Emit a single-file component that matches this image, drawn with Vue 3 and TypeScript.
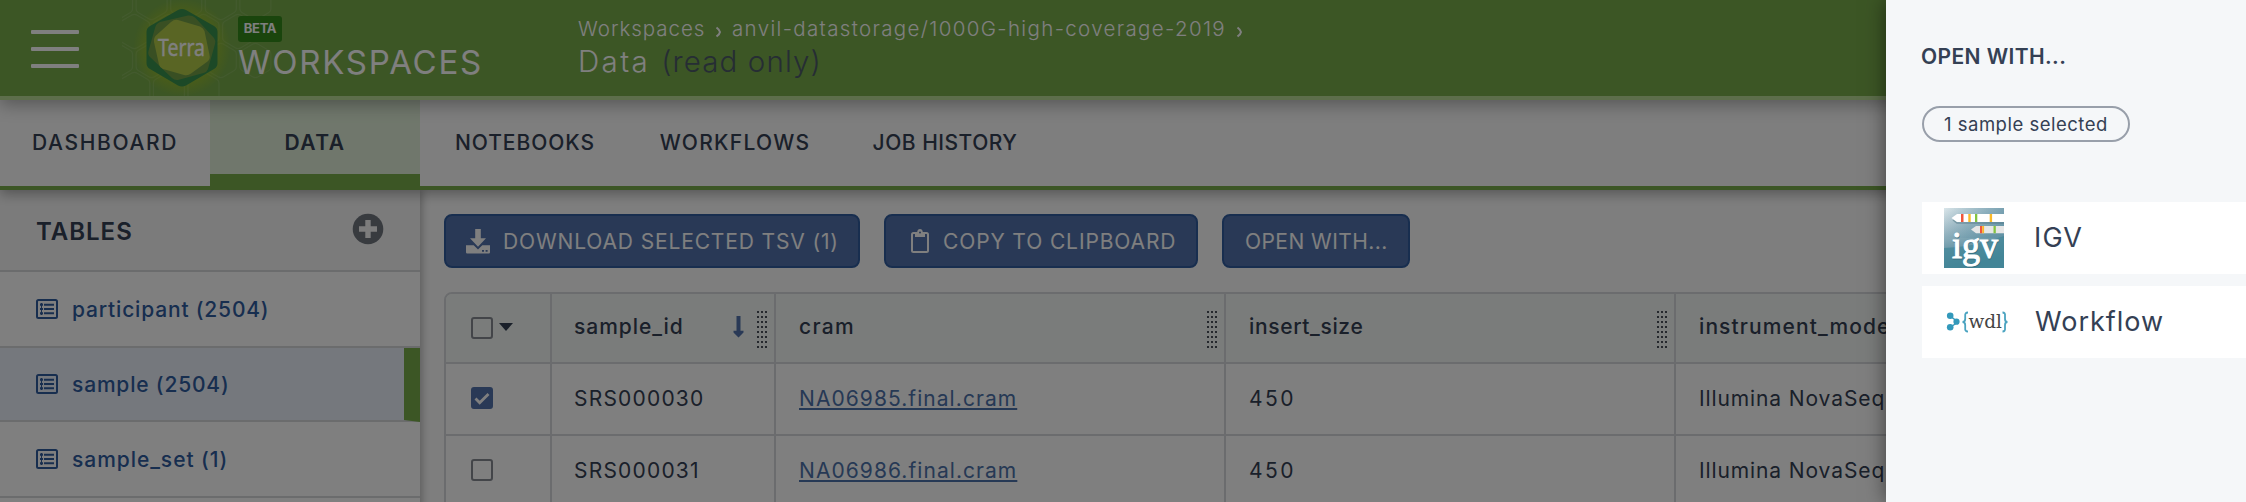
<script setup lang="ts">
interface Tab { label: string; cls: string; active?: boolean }
interface TableEntry { label: string; cls: string; active?: boolean }
interface Column { label: string; cls: string; sorted?: boolean }
interface Row { id: string; cram: string; insertSize: string; model: string; checked: boolean }

const tabs: Tab[] = [
  { label: 'DASHBOARD', cls: 'tab-dashboard' },
  { label: 'DATA', cls: 'tab-data', active: true },
  { label: 'NOTEBOOKS', cls: 'tab-notebooks' },
  { label: 'WORKFLOWS', cls: 'tab-workflows' },
  { label: 'JOB HISTORY', cls: 'tab-history' },
]
const tables: TableEntry[] = [
  { label: 'participant (2504)', cls: 'entry-first' },
  { label: 'sample (2504)', cls: 'entry-second', active: true },
  { label: 'sample_set (1)', cls: 'entry-third' },
]
const columns: Column[] = [
  { label: 'sample_id', cls: 'c-id', sorted: true },
  { label: 'cram', cls: 'c-cram' },
  { label: 'insert_size', cls: 'c-size' },
  { label: 'instrument_model', cls: 'c-model' },
]
const rows: Row[] = [
  { id: 'SRS000030', cram: 'NA06985.final.cram', insertSize: '450', model: 'Illumina NovaSeq 6000', checked: true },
  { id: 'SRS000031', cram: 'NA06986.final.cram', insertSize: '450', model: 'Illumina NovaSeq 6000', checked: false },
]

// Honeycomb behind the logo: alternate rows are shifted by half a cell.
const cellsPerRow = [5, 4, 5, 3]
const cells: { x: number; y: number }[] = []
cellsPerRow.forEach((count, r) => {
  const start = r % 2 === 0 ? 117 : 134.3
  for (let k = 0; k < count; k++) cells.push({ x: start + k * 34.6, y: 2.5 + r * 29 })
})
</script>

<template>
  <div class="screen">
    <div class="page">
      <header class="topbar">
        <div class="menu"><i /><i /><i /></div>
        <svg class="logo" width="170" height="96" viewBox="120 0 170 96">
          <defs>
            <radialGradient id="glow" gradientUnits="userSpaceOnUse" cx="182" cy="47.5" r="49">
              <stop offset="0.7" stop-color="#b0c81a" stop-opacity="0.45" />
              <stop offset="1" stop-color="#b0c81a" stop-opacity="0" />
            </radialGradient>
            <clipPath id="comb"><rect x="122" y="0" width="168" height="96" /></clipPath>
          </defs>
          <g clip-path="url(#comb)" fill="none" stroke="#a3c983" stroke-opacity="0.33" stroke-width="1.3">
            <path
              v-for="(c, i) in cells" :key="i" :transform="`translate(${c.x} ${c.y})`"
              d="M-2 -16.7Q0 -17.7 2 -16.7L13.5 -10Q15.5 -9 15.5 -6.5V6.5Q15.5 9 13.5 10L2 16.7Q0 17.7 -2 16.7L-13.5 10Q-15.5 9 -15.5 6.5V-6.5Q-15.5 -9 -13.5 -10Z"
            />
          </g>
          <circle cx="182" cy="47.5" r="49" fill="url(#glow)" />
          <path d="M178 10Q182 8 186 10L214 26Q217.500 28 217.500 32V63Q217.500 67 214 69L186 85.500Q182 87.500 178 85.500L150 69Q146.500 67 146.500 63V32Q146.500 28 150 26Z" fill="#38924e" />
          <path d="M155 28Q156 23.500 160 22L188 15.500Q192 15 195 17.500L214 38Q216 40.500 215 44L208 69Q207 72 203.500 73L178 80Q174.500 80.500 172 78L150 57Q147.500 54.500 148.500 51Z" fill="#729f47" />
          <path d="M171 22Q174.500 19 178 20L200 26.500Q203.500 28 204.500 31L209.500 55Q210.500 59 207.500 61.500L191 73.500Q188 76 184 75L163 69Q160 68 159 64.500L154 42Q153.500 38 156 35.500Z" fill="#b2ca49" />
          <text x="158" y="55.500" textLength="47" lengthAdjust="spacingAndGlyphs" class="logo-text">Terra</text>
        </svg>
        <div class="brand">
          <span class="beta">BETA</span>
          <span class="product">WORKSPACES</span>
        </div>
        <div class="crumbs">
          <div class="trail">
            <span class="crumb-root">Workspaces</span><svg class="sep" width="7" height="12" viewBox="0 0 7 12"><path d="M1.500 1.500Q4.800 4 5 6Q4.800 8 1.500 10.500" /></svg>
            <span class="crumb-name">anvil-datastorage/1000G-high-coverage-2019</span><svg class="sep" width="7" height="12" viewBox="0 0 7 12"><path d="M1.500 1.500Q4.800 4 5 6Q4.800 8 1.500 10.500" /></svg>
          </div>
          <div class="current"><span class="section">Data</span><span class="readonly">(read only)</span></div>
        </div>
      </header>

      <nav class="tabs">
        <div v-for="t in tabs" :key="t.label" class="tab" :class="[t.cls, { active: t.active }]">{{ t.label }}</div>
      </nav>

      <div class="body">
        <aside class="sidebar">
          <div class="side-head">
            <span class="side-title">TABLES</span>
            <svg class="plus" width="32" height="32" viewBox="0 0 32 32"><circle cx="16" cy="16" r="15.300" fill="#70767f" /><path d="M13.300 7h5.400v6.300H25v5.400h-6.300V25h-5.400v-6.300H7v-5.400h6.300z" fill="#f8f8f8" /></svg>
          </div>
          <div v-for="e in tables" :key="e.label" class="entry" :class="[e.cls, { active: e.active }]">
            <svg width="22" height="20" viewBox="0 0 22 20" fill="none" stroke="currentColor">
              <rect x="1" y="1" width="20" height="18" rx="1.500" stroke-width="2" />
              <path d="M8 5.700h10M8 10h10M8 14.300h10" stroke-width="2" />
              <path d="M4 5.700h3M4 10h3M4 14.300h3" stroke-width="2.200" /><path d="M5.500 4v12" stroke-width="1" />
            </svg>
            <span>{{ e.label }}</span>
          </div>
        </aside>

        <main class="content">
          <div class="actions">
            <button class="btn btn-download">
              <svg width="24" height="25" viewBox="0 0 24 25"><path d="M9.200 0h5.600v9.300h5.200L12 17.800 4 9.300h5.200z" fill="#fff" /><path d="M0 16.200h7.700L12 20.500l4.300-4.300H24v7Q24 24.500 22.800 24.500H1.200Q0 24.500 0 23.200zM16 21v1.800h2V21zm3.600 0v1.800h2V21z" fill="#fff" fill-rule="evenodd" /></svg>
              <span>DOWNLOAD SELECTED TSV (1)</span>
            </button>
            <button class="btn btn-copy">
              <svg width="18" height="24" viewBox="0 0 18 24"><rect x="1" y="4" width="16" height="19" rx="1.500" fill="none" stroke="#fff" stroke-width="2" /><path d="M4 3h2.200Q6.500 0 9 0t2.800 3H14v5H4z" fill="#fff" /><circle cx="9" cy="3.400" r="1" fill="#5272ac" /></svg>
              <span>COPY TO CLIPBOARD</span>
            </button>
            <button class="btn btn-open"><span>OPEN WITH...</span></button>
          </div>

          <div class="grid">
            <div class="row head">
              <div class="cell c-check">
                <span class="box" />
                <svg class="caret" width="14" height="8" viewBox="0 0 14 8"><path d="M0 0h14L7 8z" fill="#344054" /></svg>
              </div>
              <div v-for="c in columns" :key="c.label" class="cell" :class="c.cls">
                <span class="head-label">{{ c.label }}</span>
                <svg v-if="c.sorted" class="sort" width="11" height="22" viewBox="0 0 11 22"><path d="M3.500 0h4v14.800H10.500V16.500L5.500 21.500.500 16.500V14.800H3.500z" fill="#5272ac" /></svg>
                <span class="grip"><i v-for="n in 24" :key="n" /></span>
              </div>
            </div>
            <div v-for="r in rows" :key="r.id" class="row">
              <div class="cell c-check">
                <span class="box" :class="{ checked: r.checked }">
                  <svg v-if="r.checked" width="16" height="13" viewBox="0 0 16 13"><path d="M1.500 6.500l4.200 4.200L14.500 2" fill="none" stroke="#fff" stroke-width="2.800" /></svg>
                </span>
              </div>
              <div class="cell c-id"><span class="val">{{ r.id }}</span></div>
              <div class="cell c-cram"><a class="link">{{ r.cram }}</a></div>
              <div class="cell c-size"><span class="num">{{ r.insertSize }}</span></div>
              <div class="cell c-model"><span class="model">{{ r.model }}</span></div>
            </div>
          </div>
        </main>
      </div>
    </div>

    <div class="overlay">
      <section class="drawer">
        <h2 class="drawer-title">OPEN WITH...</h2>
        <div class="pill">1 sample selected</div>
        <div class="card">
          <svg width="60" height="60" viewBox="0 0 60 60">
            <defs>
              <linearGradient id="sky" x1="0" y1="0" x2="0.250" y2="1">
                <stop offset="0" stop-color="#dbe6ea" /><stop offset="0.350" stop-color="#a0bbc6" /><stop offset="0.650" stop-color="#6e9aaa" /><stop offset="1" stop-color="#4a8798" />
              </linearGradient>
              <linearGradient id="shade" x1="0" y1="0" x2="1" y2="0"><stop offset="0" stop-color="#5c8ea2" stop-opacity="0" /><stop offset="1" stop-color="#5c8ea2" stop-opacity="0.650" /></linearGradient>
            </defs>
            <rect width="60" height="60" fill="url(#sky)" />
            <rect width="60" height="30" fill="url(#shade)" />
            <path d="M0 40Q30 39 60 28V60H0z" fill="#3f8496" fill-opacity="0.650" />
            <path d="M9 12l4 3H60" fill="none" stroke="#4c7180" stroke-opacity="0.500" stroke-width="1.500" />
            <path d="M7.500 10L13 6H60v8H13z" fill="#fff" />
            <path d="M27 21.500L32 18H60v7.300H32z" fill="#e6e6e6" />
            <path d="M17 6h2.500v8H17zM36 18h2.300v7.300H36z" fill="#f0563b" />
            <path d="M24.300 6h2.400v8h-2.400zM45.700 6h2.400v8h-2.400zM38.300 18h1.800v7.300h-1.800z" fill="#f9b928" />
            <path d="M31 6h2.300v8H31zM49.500 18h2.300v7.300h-2.300z" fill="#83c441" />
            <text x="8.500" y="50.500" textLength="46" lengthAdjust="spacingAndGlyphs" class="igv igv-shadow">igv</text>
            <text x="8" y="49.500" textLength="46" lengthAdjust="spacingAndGlyphs" class="igv">igv</text>
          </svg>
          <span class="card-label label-igv">IGV</span>
        </div>
        <div class="card">
          <svg width="64" height="24" viewBox="0 0 64 24">
            <path d="M6 6l8 6-8 5.500" fill="none" stroke="#3399bb" stroke-width="1.500" />
            <circle cx="6.200" cy="5.700" r="3.300" fill="#3399bb" /><circle cx="12.500" cy="11.700" r="3.100" fill="#3399bb" /><circle cx="6.200" cy="17.300" r="3.300" fill="#3399bb" />
            <path d="M24 2.500Q20.800 2.500 21.200 6V9Q21.200 12 18.500 12Q21.200 12 21.200 15V18Q20.800 21.500 24 21.500M58.500 2.500Q61.500 2.500 61 6V9Q61 12 63.500 12Q61 12 61 15V18Q61.500 21.500 58.500 21.500" fill="none" stroke="#4aa3c0" stroke-width="1.800" />
            <text x="24.500" y="18" textLength="33.500" lengthAdjust="spacingAndGlyphs" class="wdl">wdl</text>
          </svg>
          <span class="card-label label-workflow">Workflow</span>
        </div>
      </section>
    </div>
  </div>
</template>

<style>
body { margin: 0; overflow: hidden; }
</style>

<style scoped>
.screen { position: relative; width: 2246px; height: 502px; overflow: hidden; font-family: Inter, "Open Sans", sans-serif; color: #344054; }
.screen * { box-sizing: border-box; }
.page { height: 502px; display: flex; flex-direction: column; background: #fdfdfd; }

.topbar { position: relative; z-index: 3; flex: none; height: 100px; display: flex; background: #78ac4a; border-bottom: 4px solid #badc96; background-clip: padding-box; box-shadow: 0 5px 16px rgba(0, 0, 0, .3); }
.menu { width: 48px; margin: 30px 41px 0 31px; display: flex; flex-direction: column; gap: 13px; }
.menu i { height: 4px; border-radius: 1px; background: #fff; }
.logo { flex: none; width: 170px; margin-right: -52px; }
.logo-text { font: 400 23px "Noto Sans", sans-serif; fill: #fff; stroke: #fff; stroke-width: .4; }
.brand { position: relative; width: 340px; padding-top: 16px; display: flex; flex-direction: column; align-items: flex-start; }
.beta { width: 44px; height: 26px; border-radius: 3px; background: #358a1b; color: #fff; font-weight: 700; font-size: 13px; line-height: 24px; text-align: center; letter-spacing: -.3px; }
.product { font-size: 33px; font-weight: 400; line-height: 41px; letter-spacing: 1.75px; color: #fff; }
.crumbs { color: #fff; white-space: nowrap; }
.trail { display: flex; align-items: center; height: 24px; margin-top: 17px; font-size: 20.5px; font-weight: 300; line-height: 24px; }
.crumb-root { letter-spacing: .98px; }
.crumb-name { letter-spacing: 1.35px; margin-left: 10px; }
.sep { fill: none; stroke: #fff; stroke-width: 2.100; margin-left: 9.500px; margin-top: 5px; }
.current { font-size: 29.500px; line-height: 40px; font-weight: 300; }
.section { letter-spacing: 2.4px; }
.readonly { letter-spacing: 1.1px; color: #4c5a68; margin-left: 11px; }

.tabs { position: relative; z-index: 2; flex: none; height: 90px; display: flex; background: #fcfcfc; border-bottom: 4px solid #78ac4a; box-shadow: 0 4px 12px rgba(0, 0, 0, .32); }
.tab { width: 210px; text-align: center; line-height: 85px; font-size: 21px; font-weight: 500; }
.tab.active { font-weight: 600; background: #e0efd8; border-bottom: 12px solid #78ac4a; }
.tab-dashboard { letter-spacing: 1.65px; }
.tab-data { letter-spacing: 1.43px; }
.tab-notebooks { letter-spacing: .97px; }
.tab-workflows { letter-spacing: 1.26px; }
.tab-history { letter-spacing: .5px; }

.body { flex: 1; display: flex; min-height: 0; }
.sidebar { flex: none; width: 420px; height: 320px; background: #fff; box-shadow: 2px 0 8px rgba(0, 0, 0, .28); }
.side-head { height: 82px; padding: 0 36px; display: flex; align-items: center; justify-content: space-between; background: #f7f7f7; border-bottom: 2px solid #d6d8da; }
.side-title { font-size: 24px; font-weight: 600; letter-spacing: 1px; margin-top: 2px; }
.plus { margin-top: -2px; }
.entry { height: 76px; padding: 0 36px; display: flex; align-items: center; gap: 14px; color: #2f5c9f; font-size: 21px; font-weight: 500; border-bottom: 2px solid #d6d8da; }
.entry.active { height: 74px; background: #ebf0fb; border-right: 16px solid #78ac4a; }
.entry-first, .entry-second { letter-spacing: .82px; }
.entry-third { letter-spacing: .95px; }

.content { flex: 1; min-width: 0; padding: 24px 0 0 24px; }
.actions { display: flex; gap: 24px; }
.btn { height: 54px; display: flex; align-items: center; border: 2px solid #305c9e; border-radius: 8px; background: #5272ac; color: #fff; padding: 0 0 0 21px; font-family: inherit; font-size: 21px; font-weight: 400; white-space: nowrap; }
.btn-download { width: 416px; letter-spacing: .86px; gap: 13px; padding-left: 20px; }
.btn-copy { width: 314px; letter-spacing: .88px; gap: 14px; padding-left: 25px; }
.btn-open { width: 188px; letter-spacing: .45px; }

.grid { width: 1880px; margin-top: 24px; border: 2px solid #d6d9dc; border-radius: 8px 0 0 0; overflow: hidden; }
.row { height: 72px; display: flex; background: #fefefe; border-bottom: 2px solid #d6d9dc; font-size: 21px; font-weight: 400; }
.row.head { height: 70px; background: #f4f9f6; font-weight: 500; }
.cell { position: relative; flex: none; display: flex; align-items: center; padding-left: 22px; padding-bottom: 1px; border-right: 2px solid #d6d9dc; white-space: nowrap; }
.head .cell { padding-bottom: 3px; }
.c-check { width: 106px; padding-left: 25px; padding-bottom: 2px; }
.head .c-check { padding-left: 25px; padding-bottom: 0; }
.c-id { width: 224px; }
.c-cram { width: 450px; padding-left: 23px; }
.c-size { width: 450px; padding-left: 23px; }
.c-model { width: 450px; padding-left: 23px; }
.head .c-id { letter-spacing: .95px; }
.head .c-cram { letter-spacing: 1.27px; }
.head .c-size { letter-spacing: .65px; }
.head .c-model { letter-spacing: 1.1px; }
.box { width: 22px; height: 22px; border: 2px solid #868a92; border-radius: 3px; display: flex; align-items: center; justify-content: center; }
.box.checked { background: #5272ac; border-color: #5272ac; }
.caret { margin-left: 6px; margin-top: -2px; }
.sort { margin-left: auto; margin-right: 13px; }
.grip { display: grid; grid-template-columns: repeat(3, 2px); gap: 3px 2px; margin: 5px 7px 0 auto; }
.sort + .grip { margin-left: 0; }
.grip i { width: 2px; height: 2px; background: #4a505a; }
.val { letter-spacing: 1.2px; }
.link { letter-spacing: 1.06px; color: #4d72aa; text-decoration: underline; text-decoration-thickness: 2px; text-underline-offset: 2px; text-decoration-skip-ink: none; }
.num { letter-spacing: 2.4px; }
.model { letter-spacing: .89px; }

.overlay { position: absolute; inset: 0; z-index: 10; display: flex; justify-content: flex-end; background: rgba(0, 0, 0, .5); }
.drawer { width: 360px; padding: 44px 0 0 36px; background: #f5f7f9; box-shadow: 0 0 20px rgba(0, 0, 0, .5); }
.drawer-title { margin: 0 0 0 -1px; font-size: 21px; font-weight: 600; line-height: 26px; letter-spacing: .4px; }
.pill { width: 208px; height: 36px; margin-top: 36px; border: 2px solid #989faa; border-radius: 18px; font-size: 18.5px; font-weight: 400; line-height: 32px; letter-spacing: .5px; padding-left: 20px; white-space: nowrap; }
.card { height: 72px; margin-top: 12px; padding-left: 22px; display: flex; align-items: center; background: #fff; }
.pill + .card { margin-top: 60px; }
.card-label { font-size: 27px; font-weight: 400; line-height: 72px; }
.label-igv { letter-spacing: 1.2px; margin-left: 30px; }
.label-workflow { letter-spacing: 1px; margin-left: 27px; }
.igv { font: 400 38px "Liberation Serif", serif; fill: #fff; stroke: #fff; stroke-width: 1.1; }
.igv-shadow { fill: #2d5f70; stroke: #2d5f70; opacity: .6; }
.wdl { font: 400 18px "DejaVu Serif", serif; fill: #444; }
</style>
